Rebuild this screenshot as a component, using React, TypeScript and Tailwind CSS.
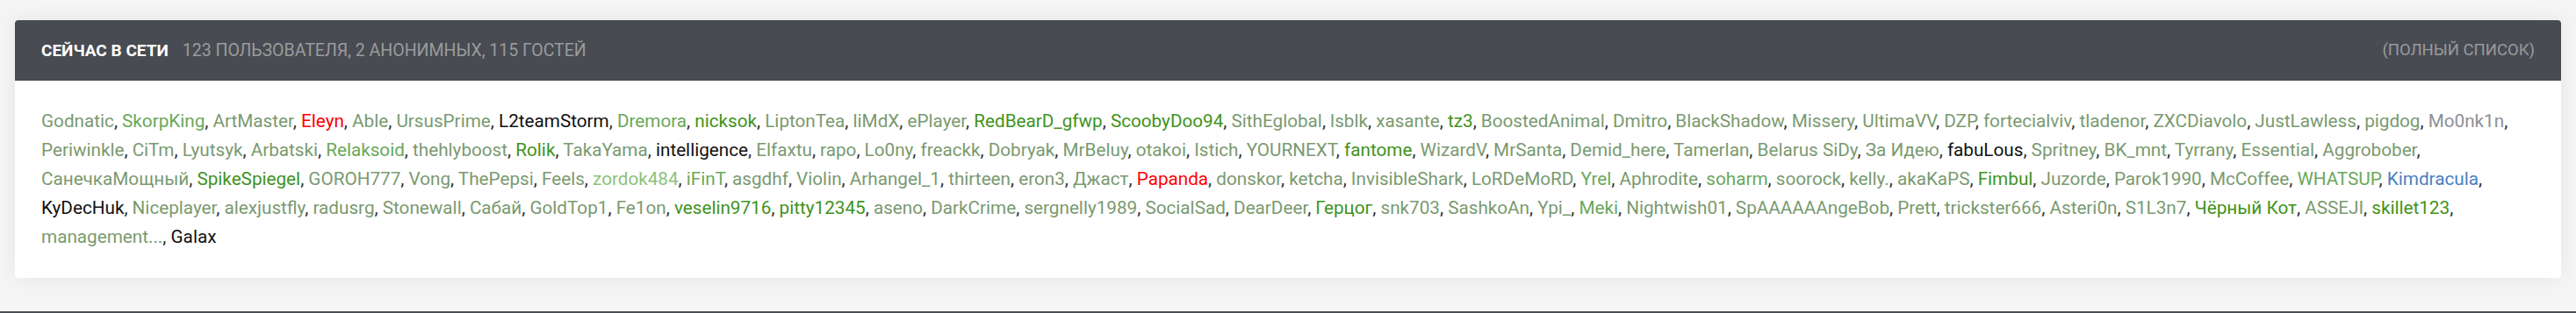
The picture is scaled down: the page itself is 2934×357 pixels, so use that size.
const D = "text-[#7a9a70]";
const LG = "text-[#6aa85a]";
const G = "text-[#3f931c]";
const R = "text-[#ff0000]";
const K = "text-[#111111]";
const B = "text-[#4a7fc1]";
const GR = "text-[#8d9096]";
const PL = "text-[#8cc17c]";

type Member = { name: string; color: string };

const members: Member[] = [
  { name: "Godnatic", color: D },
  { name: "SkorpKing", color: LG },
  { name: "ArtMaster", color: D },
  { name: "Eleyn", color: R },
  { name: "Able", color: D },
  { name: "UrsusPrime", color: D },
  { name: "L2teamStorm", color: K },
  { name: "Dremora", color: LG },
  { name: "nicksok", color: G },
  { name: "LiptonTea", color: D },
  { name: "liMdX", color: D },
  { name: "ePlayer", color: D },
  { name: "RedBearD_gfwp", color: G },
  { name: "ScoobyDoo94", color: G },
  { name: "SithEglobal", color: D },
  { name: "lsblk", color: D },
  { name: "xasante", color: D },
  { name: "tz3", color: G },
  { name: "BoostedAnimal", color: D },
  { name: "Dmitro", color: D },
  { name: "BlackShadow", color: D },
  { name: "Missery", color: D },
  { name: "UltimaVV", color: D },
  { name: "DZP", color: D },
  { name: "fortecialviv", color: D },
  { name: "tladenor", color: D },
  { name: "ZXCDiavolo", color: D },
  { name: "JustLawless", color: D },
  { name: "pigdog", color: D },
  { name: "Mo0nk1n", color: GR },
  { name: "Periwinkle", color: D },
  { name: "CiTm", color: D },
  { name: "Lyutsyk", color: D },
  { name: "Arbatski", color: D },
  { name: "Relaksoid", color: LG },
  { name: "thehlyboost", color: D },
  { name: "Rolik", color: G },
  { name: "TakaYama", color: D },
  { name: "intelligence", color: K },
  { name: "Elfaxtu", color: D },
  { name: "rapo", color: D },
  { name: "Lo0ny", color: D },
  { name: "freackk", color: D },
  { name: "Dobryak", color: D },
  { name: "MrBeluy", color: D },
  { name: "otakoi", color: D },
  { name: "Istich", color: D },
  { name: "YOURNEXT", color: D },
  { name: "fantome", color: G },
  { name: "WizardV", color: D },
  { name: "MrSanta", color: D },
  { name: "Demid_here", color: D },
  { name: "Tamerlan", color: D },
  { name: "Belarus SiDy", color: D },
  { name: "За Идею", color: D },
  { name: "fabuLous", color: K },
  { name: "Spritney", color: D },
  { name: "BK_mnt", color: D },
  { name: "Tyrrany", color: D },
  { name: "Essential", color: D },
  { name: "Aggrobober", color: D },
  { name: "СанечкаМощный", color: D },
  { name: "SpikeSpiegel", color: G },
  { name: "GOROH777", color: D },
  { name: "Vong", color: D },
  { name: "ThePepsi", color: D },
  { name: "Feels", color: D },
  { name: "zordok484", color: PL },
  { name: "iFinT", color: LG },
  { name: "asgdhf", color: D },
  { name: "Violin", color: D },
  { name: "Arhangel_1", color: D },
  { name: "thirteen", color: D },
  { name: "eron3", color: D },
  { name: "Джаст", color: D },
  { name: "Papanda", color: R },
  { name: "donskor", color: D },
  { name: "ketcha", color: D },
  { name: "InvisibleShark", color: D },
  { name: "LoRDeMoRD", color: D },
  { name: "Yrel", color: LG },
  { name: "Aphrodite", color: D },
  { name: "soharm", color: LG },
  { name: "soorock", color: D },
  { name: "kelly.", color: D },
  { name: "akaKaPS", color: D },
  { name: "Fimbul", color: G },
  { name: "Juzorde", color: D },
  { name: "Parok1990", color: D },
  { name: "McCoffee", color: D },
  { name: "WHATSUP", color: LG },
  { name: "Kimdracula", color: B },
  { name: "KyDecHuk", color: K },
  { name: "Niceplayer", color: D },
  { name: "alexjustfly", color: D },
  { name: "radusrg", color: D },
  { name: "Stonewall", color: D },
  { name: "Сабай", color: D },
  { name: "GoldTop1", color: D },
  { name: "Fe1on", color: D },
  { name: "veselin9716", color: G },
  { name: "pitty12345", color: G },
  { name: "aseno", color: D },
  { name: "DarkCrime", color: D },
  { name: "sergnelly1989", color: D },
  { name: "SocialSad", color: D },
  { name: "DearDeer", color: D },
  { name: "Герцог", color: G },
  { name: "snk703", color: D },
  { name: "SashkoAn", color: D },
  { name: "Ypi_", color: D },
  { name: "Meki", color: LG },
  { name: "Nightwish01", color: D },
  { name: "SpAAAAAAngeBob", color: D },
  { name: "Prett", color: D },
  { name: "trickster666", color: D },
  { name: "Asteri0n", color: D },
  { name: "S1L3n7", color: D },
  { name: "Чёрный Кот", color: G },
  { name: "ASSEJI", color: D },
  { name: "skillet123", color: G },
  { name: "management...", color: D },
  { name: "Galax", color: K },
];

export default function App() {
  return (
    <div className="min-h-[357px] bg-[#f5f5f5] pt-[23px] font-['Roboto',sans-serif]">
      <section className="mx-[17px] overflow-hidden rounded-[4px] bg-white shadow-[0_0_24px_rgba(0,0,0,0.07)]">
        <div className="flex items-center justify-between bg-[#484b52] px-[30px] py-[21px] leading-[27px]">
          <div className="flex items-baseline gap-[16px]">
            <h3 className="text-[19px] font-bold uppercase text-white">Сейчас в сети</h3>
            <span className="text-[19.5px] uppercase text-[#9b9b9b]">
              123 пользователя, 2 анонимных, 115 гостей
            </span>
          </div>
          <a href="#" className="text-[18.5px] uppercase text-[#9b9b9b]">
            (Полный список)
          </a>
        </div>
        <div className="p-[30px] text-[20.7px] leading-[33px] text-[#333333]">
          {members.map((m, i) => (
            <span key={m.name}>
              <a href="#" className={m.color}>
                {m.name}
              </a>
              {i < members.length - 1 ? ", " : ""}
            </span>
          ))}
        </div>
      </section>
      <div className="mt-[38px] h-[2px] bg-[#4a4c54]" />
    </div>
  );
}
